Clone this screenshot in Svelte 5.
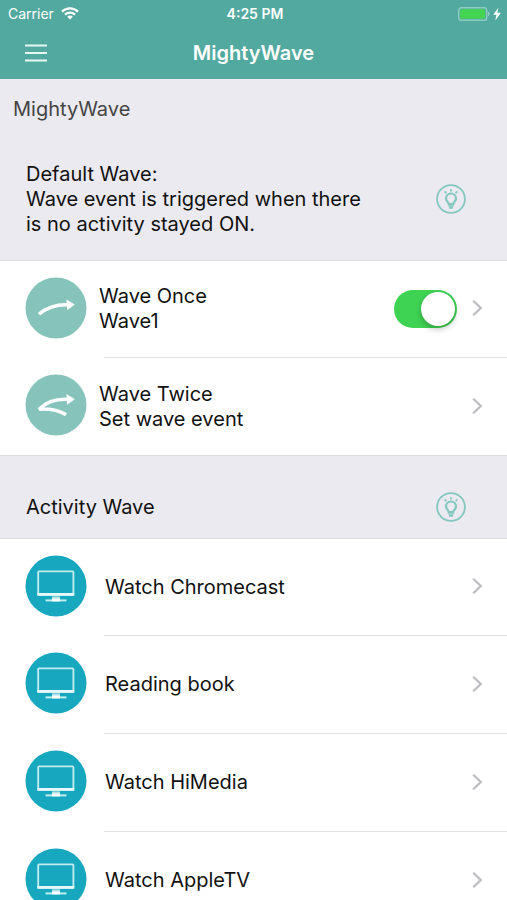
<script lang="ts">
	let waveOnce = true;

	const waves = [
		{ title: 'Wave Once', detail: 'Wave1', icon: 'once' },
		{ title: 'Wave Twice', detail: 'Set wave event', icon: 'twice' }
	];

	const activities = ['Watch Chromecast', 'Reading book', 'Watch HiMedia', 'Watch AppleTV'];
</script>

<div class="app">
	<header>
		<div class="status">
			<div class="carrier">
				<span>Carrier</span>
				<svg width="18" height="13" viewBox="0 0 18 13" fill="none" stroke="#fff" stroke-width="2.2">
					<path d="M1 4.6a11.4 11.4 0 0 1 16 0"></path>
					<path d="M4 7.6a7.2 7.2 0 0 1 10 0"></path>
					<path d="M9 12.6L6.2 9.8a4 4 0 0 1 5.6 0z" fill="#fff" stroke="none"></path>
				</svg>
			</div>
			<span class="time">4:25 PM</span>
			<svg class="battery" width="44" height="14" viewBox="0 0 44 14">
				<rect x="0.7" y="0.7" width="28" height="12.6" rx="2.5" fill="none" stroke="#8fccc2" stroke-width="1.4"></rect>
				<rect x="2.2" y="2.2" width="25" height="9.6" rx="1" fill="#43d551"></rect>
				<path d="M30 4.8q1.8.6 1.8 2.2t-1.8 2.2z" fill="#8fccc2"></path>
				<path d="M40.4 0.8L35.2 7.8h3.2l-1.2 5.6 5.8-7.6h-3.6z" fill="#fff"></path>
			</svg>
		</div>
		<div class="nav">
			<button class="menu" aria-label="Menu">
				<svg width="24" height="18" viewBox="0 0 24 18" stroke="#e6f7f4" stroke-width="2">
					<path d="M1 1.5h22M1 9h22M1 16.5h22"></path>
				</svg>
			</button>
			<h1>MightyWave</h1>
		</div>
	</header>

	{#snippet hint(label: string)}
		<button class="hint" aria-label={label}>
			<svg width="30" height="30" viewBox="0 0 30 30" fill="none" stroke="#84c8bd" stroke-width="1.8">
				<circle cx="15" cy="15" r="13.9"></circle>
				<path d="M12.8 20.2c0-2.2-2.8-3-2.8-5.7a5 5 0 0 1 10 0c0 2.7-2.8 3.5-2.8 5.7z" stroke-width="2.2"></path>
				<path d="M12.4 22h5.2M13 23.9h4" stroke-width="1.6"></path>
				<path d="M15 5.2v2.2M8.7 7.4l1.7 1.7M21.3 7.4l-1.7 1.7"></path>
			</svg>
		</button>
	{/snippet}

	{#snippet chevron()}
		<svg class="chevron" width="12" height="18" viewBox="0 0 12 18" fill="none" stroke="#bcbcc0" stroke-width="2.2">
			<path d="M2.2 1.8L9.8 9l-7.6 7.2"></path>
		</svg>
	{/snippet}

	<main>
		<h2>MightyWave</h2>

		<div class="section default">
			<p>Default Wave:<br />Wave event is triggered when there is no activity stayed ON.</p>
			{@render hint('About default wave')}
		</div>
		<ul>
			{#each waves as wave}
				<li>
					<a class="wave" href="#{wave.icon}">
						<svg class="icon" width="62" height="62" viewBox="0 0 62 62">
							<circle cx="31" cy="31" r="30.5" fill="#86c3bb"></circle>
							<g fill="none" stroke="#fff" stroke-width="3.6">
								{#if wave.icon === 'once'}
									<path d="M14 37.2Q26 27.2 43 27.8"></path>
								{:else}
									<path d="M41 40.8Q30 34.2 14.2 35.2Q25 24.4 43 25.4" stroke-linejoin="bevel"></path>
								{/if}
							</g>
							{#if wave.icon === 'once'}
								<path d="M41.4 22.4l8.4 5.2-7.6 5.6z" fill="#fff"></path>
							{:else}
								<path d="M41.4 20l8.4 5.2-7.6 5.6z" fill="#fff"></path>
							{/if}
						</svg>
						<span>{wave.title}<br />{wave.detail}</span>
						{#if wave.icon !== 'once'}
							{@render chevron()}
						{/if}
					</a>
					{#if wave.icon === 'once'}
						<input class="switch" type="checkbox" role="switch" aria-label={wave.title} bind:checked={waveOnce} />
						<a class="more" href="#{wave.icon}" aria-label="Edit {wave.title}">{@render chevron()}</a>
					{/if}
				</li>
			{/each}
		</ul>

		<div class="section activity">
			<p>Activity Wave</p>
			{@render hint('About activity wave')}
		</div>
		<ul>
			{#each activities as name}
				<li>
					<a href="#activity">
						<svg class="icon" width="62" height="62" viewBox="0 0 62 62">
							<circle cx="31" cy="31" r="30.5" fill="#17a8bf"></circle>
							<rect x="13.2" y="16.4" width="35.2" height="23.4" rx="0.8" fill="none" stroke="#c4edf2" stroke-width="1.8"></rect>
							<path d="M12.3 38h37v2.8h-37z" fill="#e6f8fa"></path>
							<path d="M27 41.4h8v2.4h-8z" fill="#b4e4ea"></path>
							<path d="M20.5 44.4h21v2h-21z" fill="#c4edf2"></path>
							<path d="M27 43.4h8v3h-8z" fill="#fff"></path>
						</svg>
						<span>{name}</span>
						{@render chevron()}
					</a>
				</li>
			{/each}
		</ul>
	</main>
</div>

<style>
	:global(body) {
		margin: 0;
	}

	.app {
		display: flex;
		flex-direction: column;
		height: 100vh;
		background-color: #fff;
		color: #111;
		font-family: Inter, 'Liberation Sans', sans-serif;
		font-size: 20px;
		line-height: 25px;
	}

	header {
		flex-shrink: 0;
		background-color: #52a99f;
		color: #fff;
	}

	.status {
		display: grid;
		grid-template-columns: 1fr auto 1fr;
		align-items: center;
		height: 27px;
		padding: 0 5px 0 8px;
		font-size: 14px;
		line-height: 16px;
	}

	.carrier {
		display: flex;
		align-items: center;
		gap: 7px;
	}

	.time {
		font-weight: 600;
	}

	.battery {
		justify-self: end;
	}

	.nav {
		display: grid;
		grid-template-columns: 48px 1fr 48px;
		align-items: center;
		height: 52px;
	}

	button {
		display: flex;
		padding: 0;
		border: none;
		background: none;
		cursor: pointer;
	}

	.menu {
		justify-content: flex-end;
	}

	h1,
	h2,
	p,
	ul {
		margin: 0;
		padding: 0;
	}

	h1 {
		font-size: 20px;
		font-weight: 600;
		text-align: center;
	}

	main {
		flex: 1;
		min-height: 0;
		overflow-y: auto;
		scrollbar-width: none;
	}

	h2 {
		padding: 18px 13px;
		background-color: #ebeaf0;
		color: #444;
		font-size: 20px;
		font-weight: 400;
	}

	.section {
		display: flex;
		align-items: center;
		justify-content: space-between;
		box-sizing: border-box;
		padding: 0 41px 0 26px;
		border-bottom: 1px solid #dcdbe0;
		background-color: #ebeaf0;
	}

	.section p {
		max-width: 340px;
	}

	.default {
		min-height: 121px;
		padding-bottom: 2px;
	}

	.activity {
		min-height: 84px;
		padding-top: 20px;
		border-top: 1px solid #dcdbe0;
	}

	ul {
		list-style: none;
	}

	li {
		display: flex;
		align-items: center;
		height: 96px;
		background-color: #fff;
	}

	li + li {
		height: 97px;
		border-top: 1px solid;
		border-image: linear-gradient(to right, transparent 105px, #e2e2e5 105px) 1;
	}

	li a {
		display: flex;
		flex: 1;
		align-items: center;
		gap: 18px;
		padding: 0 24px 0 25px;
		color: inherit;
		text-decoration: none;
	}

	li .wave {
		gap: 12px;
	}

	li .more {
		flex: none;
		padding: 0 24px 0 14px;
	}

	.icon {
		flex-shrink: 0;
		margin-bottom: 3px;
	}

	.chevron {
		flex-shrink: 0;
		margin: 0 0 2px auto;
	}

	.switch {
		flex-shrink: 0;
		width: 63px;
		height: 38px;
		margin: 0;
		border-radius: 19px;
		background-color: #d9d9de;
		appearance: none;
		cursor: pointer;
		transition: background-color 0.2s;
	}

	.switch::before {
		content: '';
		display: block;
		width: 34px;
		height: 34px;
		margin: 2px;
		border-radius: 50%;
		background-color: #fff;
		box-shadow: 0 3px 6px rgba(0, 0, 0, 0.25);
		transition: margin-left 0.2s;
	}

	.switch:checked {
		background-color: #3fd353;
	}

	.switch:checked::before {
		margin-left: 27px;
	}
</style>
